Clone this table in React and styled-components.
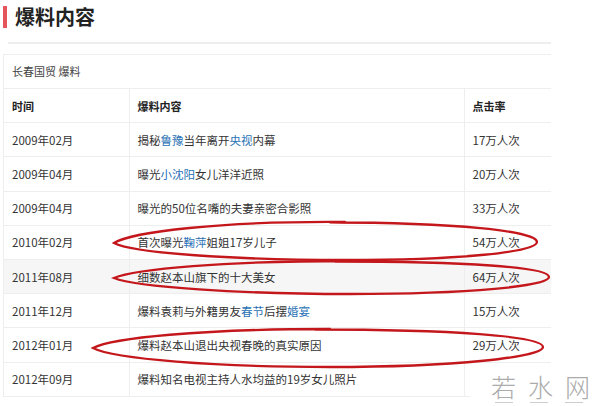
import React from 'react'
import styled, { createGlobalStyle } from 'styled-components'

const GlobalStyle = createGlobalStyle`
  html, body { margin: 0; padding: 0; background: #fff; }
  body { font-family: "Noto Sans CJK SC", "Liberation Sans", sans-serif; color: #333; }
`

const rows = [
  { date: '2009年02月', parts: ['揭秘', ['鲁豫'], '当年离开', ['央视'], '内幕'], hits: '17万人次' },
  { date: '2009年04月', parts: ['曝光', ['小沈阳'], '女儿洋洋近照'], hits: '20万人次' },
  { date: '2009年04月', parts: ['曝光的50位名嘴的夫妻亲密合影照'], hits: '33万人次' },
  { date: '2010年02月', parts: ['首次曝光', ['鞠萍'], '姐姐17岁儿子'], hits: '54万人次' },
  { date: '2011年08月', parts: ['细数赵本山旗下的十大美女'], hits: '64万人次', shade: true },
  { date: '2011年12月', parts: ['爆料袁莉与外籍男友', ['春节'], '后摆', ['婚宴']], hits: '15万人次' },
  { date: '2012年01月', parts: ['爆料赵本山退出央视春晚的真实原因'], hits: '29万人次' },
  { date: '2012年09月', parts: ['爆料知名电视主持人水均益的19岁女儿照片'], hits: '' },
]

const Page = styled.div`
  position: relative;
  width: 600px;
  height: 406px;
  overflow: hidden;
`

const Heading = styled.div`
  display: flex;
  align-items: center;
  gap: 8px;
  padding: 6px 0 0 3px;
  height: 22px;
`

const Bar = styled.span`
  width: 4px;
  height: 22px;
  background: #e4565b;
`

const Title = styled.h2`
  margin: 0;
  font-size: 20px;
  font-weight: bold;
  line-height: 22px;
  color: #222;
`

const Divider = styled.div`
  margin: 14px 49px 0 8px;
  height: 2px;
  background: #eeeeee;
`

const Box = styled.div`
  margin: 10px 49px 0 3px;
  border-top: 1px solid #eee;
  border-left: 1px solid #eee;
`

const Caption = styled.div`
  height: 33px;
  line-height: 33px;
  padding-left: 8px;
  font-size: 11px;
  color: #444;
  border-bottom: 1px solid #eee;
`

const Table = styled.table`
  width: 100%;
  border-collapse: collapse;
  table-layout: fixed;
  font-size: 11.5px;
`

const Cell = styled.td`
  height: 33.2px;
  padding: 0 0 0 8px;
  border-bottom: 1px solid #eee;
  border-right: 1px solid #eee;
  white-space: nowrap;
  color: #333;
  background: ${p => (p.$shade ? '#f6f6f6' : '#fff')};
  &:last-child { border-right: none; }
`

const Head = styled(Cell).attrs({ as: 'th' })`
  text-align: left;
  font-weight: bold;
  font-size: 11px;
  color: #222;
`

const Link = styled.span`
  color: #2a72b5;
`

const Marks = styled.svg`
  position: absolute;
  left: 0;
  top: 0;
  pointer-events: none;
`

const Watermark = styled.div`
  position: absolute;
  left: 470px;
  top: 364px;
  width: 130px;
  height: 42px;
  background: #fff;
  display: flex;
  flex-direction: column;
  align-items: flex-start;
  padding-left: 21px;
  box-sizing: border-box;
`

const Mark = styled.div`
  display: flex;
  gap: 12px;
  font-size: 25px;
  line-height: 32px;
  color: #ababab;
  font-weight: 300;
  margin-top: 6px;
`

const Dashes = styled.div`
  display: flex;
  gap: 17px;
  padding-left: 4px;
  span { width: 18px; height: 1px; background: #cdcdcd; }
`

const App = () => (
  <Page>
    <GlobalStyle />
    <Heading>
      <Bar />
      <Title>爆料内容</Title>
    </Heading>
    <Divider />
    <Box>
      <Caption>长春国贸 爆料</Caption>
      <Table>
        <colgroup>
          <col style={{ width: 125 }} />
          <col style={{ width: 335 }} />
          <col />
        </colgroup>
        <thead>
          <tr>
            <Head>时间</Head>
            <Head>爆料内容</Head>
            <Head>点击率</Head>
          </tr>
        </thead>
        <tbody>
          {rows.map((r, i) => (
            <tr key={i}>
              <Cell $shade={r.shade}>{r.date}</Cell>
              <Cell $shade={r.shade}>
                {r.parts.map((p, j) => (Array.isArray(p) ? <Link key={j}>{p[0]}</Link> : <span key={j}>{p}</span>))}
              </Cell>
              <Cell $shade={r.shade}>{r.hits}</Cell>
            </tr>
          ))}
        </tbody>
      </Table>
    </Box>
    <Marks width="600" height="406" viewBox="0 0 600 406">
      <g fill="none" stroke="#c4171c" strokeWidth="2.3" strokeLinecap="round">
        <path d="M 345 222 C 220 221 132 232 114 243 C 132 253 235 260 345 260 C 460 260 537 252 537 242 C 537 231 455 222.5 330 222.5" />
        <path d="M 350 261 C 225 261 135 269 114 278 C 136 287 240 294 350 294 C 470 294 549 286 549 277 C 549 267 465 261.5 335 261.5" />
        <path d="M 330 329 C 200 329 112 338 93 348 C 114 359 215 367 330 367 C 455 367 543 357 543 347 C 543 336 450 329.5 315 329.5" />
      </g>
    </Marks>
    <Watermark>
      <Mark><span>若</span><span>水</span><span>网</span></Mark>
      <Dashes><span /><span /><span /></Dashes>
    </Watermark>
  </Page>
)

export default App
